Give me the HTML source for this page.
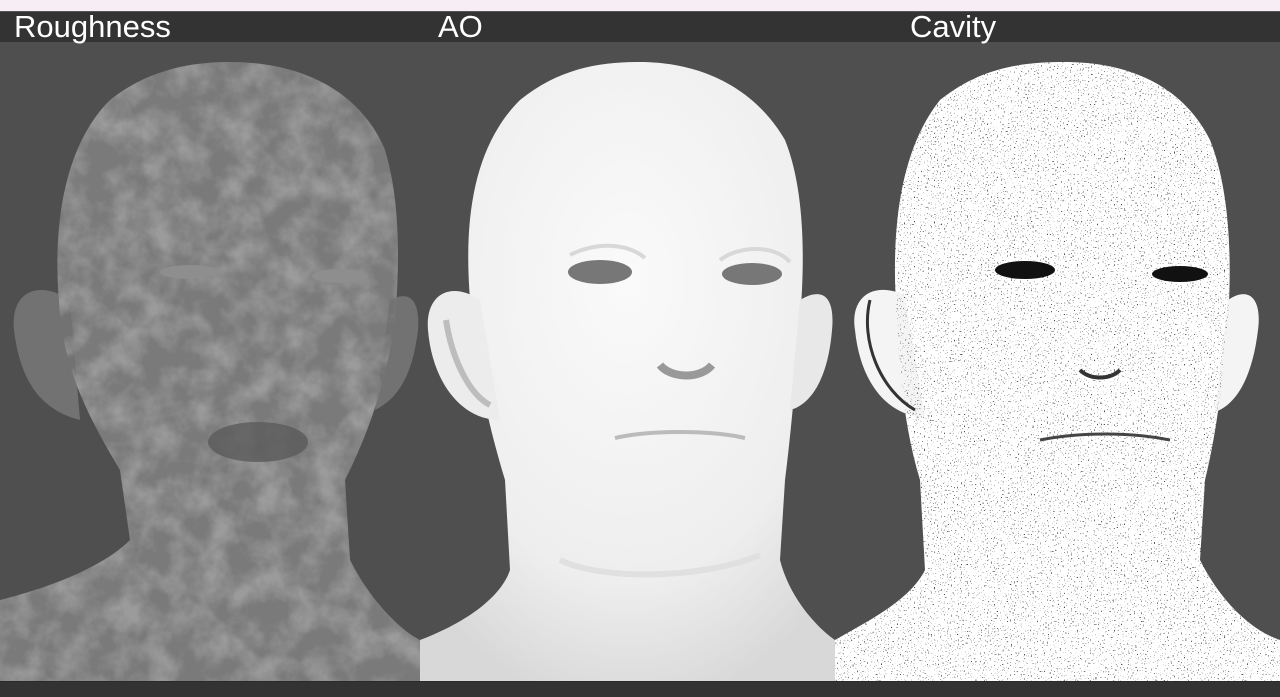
<!DOCTYPE html>
<html><head><meta charset="utf-8"><style>
html,body{margin:0;padding:0;width:1280px;height:696px;overflow:hidden;background:#4f4f4f;font-family:"Liberation Sans",sans-serif}
.top{position:absolute;left:0;top:0;width:1280px;height:11px;background:#f7eef5}
.bar{position:absolute;left:0;top:11px;width:1280px;height:30px;background:#333;border-top:1px solid #555}
.bar span{position:absolute;top:-3px;color:#fff;font-size:31px;font-family:"Liberation Sans",sans-serif}
.bot{position:absolute;left:0;top:681px;width:1280px;height:15px;background:#333;border-top:1px solid #2a2a2a}
svg{position:absolute;left:0;top:41px}
</style></head><body>
<div class="top"></div>
<div class="bar"><span style="left:14px">Roughness</span><span style="left:438px">AO</span><span style="left:910px">Cavity</span></div>
<svg width="1280" height="640" viewBox="0 41 1280 640">
<defs>
<filter id="mott" x="0" y="0" width="1" height="1"><feTurbulence type="fractalNoise" baseFrequency="0.035" numOctaves="4" seed="3"/><feColorMatrix type="matrix" values="0 0 0 0 0.33  0 0 0 0 0.33  0 0 0 0 0.33  0 0 0 2.2 -0.75"/><feComposite in2="SourceGraphic" operator="in"/></filter>
<filter id="spk" x="0" y="0" width="1" height="1"><feTurbulence type="fractalNoise" baseFrequency="0.7" numOctaves="1" seed="5"/><feColorMatrix type="matrix" values="0 0 0 0 0  0 0 0 0 0  0 0 0 0 0  0 0 0 -18 6.2"/><feComposite in2="SourceGraphic" operator="in"/></filter>
<radialGradient id="ao" cx="0.5" cy="0.35" r="0.7"><stop offset="0" stop-color="#fafafa"/><stop offset="0.7" stop-color="#eeeeee"/><stop offset="1" stop-color="#d8d8d8"/></radialGradient>
</defs>
<!-- Roughness -->
<g>
<path d="M0 600 C40 590 100 570 130 540 L120 470 C90 420 70 380 62 330 C50 240 60 150 110 100 C150 68 195 62 230 62 C300 62 360 90 385 150 C400 200 400 260 395 320 C385 390 365 440 345 480 L350 560 C370 600 400 630 420 640 L420 681 L0 681 Z" fill="#7a7a7a"/>
<path d="M70 300 C40 280 10 290 14 330 C20 380 40 410 80 420 Z" fill="#727272"/>
<path d="M390 300 C410 290 420 300 418 330 C412 380 395 400 375 410 Z" fill="#727272"/>
<path d="M0 600 C40 590 100 570 130 540 L120 470 C90 420 70 380 62 330 C50 240 60 150 110 100 C150 68 195 62 230 62 C300 62 360 90 385 150 C400 200 400 260 395 320 C385 390 365 440 345 480 L350 560 C370 600 400 630 420 640 L420 681 L0 681 Z" fill="#000" filter="url(#mott)"/>
<ellipse cx="190" cy="272" rx="30" ry="7" fill="#8e8e8e"/><ellipse cx="340" cy="276" rx="28" ry="7" fill="#8e8e8e"/>
<ellipse cx="258" cy="442" rx="50" ry="20" fill="#5a5a5a" opacity="0.8"/>
</g>
<!-- AO -->
<g>
<path d="M420 640 C460 625 500 600 510 570 L505 480 C490 430 478 380 472 320 C462 230 470 150 520 100 C560 68 600 62 640 62 C690 62 750 80 785 140 C805 190 805 260 800 320 C795 390 790 440 785 480 L780 560 C790 600 820 630 835 640 L835 681 L420 681 Z" fill="url(#ao)"/>
<path d="M480 300 C450 280 425 295 428 330 C432 380 460 420 500 420 Z" fill="#ececec"/>
<path d="M800 300 C825 285 835 300 832 330 C828 380 810 405 790 410 Z" fill="#e8e8e8"/>
<path d="M446 320 C452 360 470 395 490 405" stroke="#bdbdbd" stroke-width="6" fill="none"/>
<ellipse cx="600" cy="272" rx="32" ry="12" fill="#777"/><ellipse cx="752" cy="274" rx="30" ry="11" fill="#777"/>
<path d="M570 255 C600 240 630 245 645 258" stroke="#d8d8d8" stroke-width="4" fill="none"/>
<path d="M720 260 C740 245 775 245 790 262" stroke="#d8d8d8" stroke-width="4" fill="none"/>
<path d="M660 365 C670 378 700 380 712 365" stroke="#999" stroke-width="8" fill="none"/>
<path d="M615 438 C650 430 710 430 745 438" stroke="#bbb" stroke-width="4" fill="none"/>
<path d="M560 560 C600 580 700 580 760 555" stroke="#e0e0e0" stroke-width="6" fill="none"/>
</g>
<!-- Cavity -->
<g>
<path d="M835 640 C870 620 910 600 925 570 L920 480 C905 430 900 380 897 320 C890 230 900 150 940 100 C980 68 1020 62 1065 62 C1120 62 1180 80 1210 140 C1230 190 1232 260 1228 320 C1222 390 1215 440 1205 480 L1200 560 C1220 600 1250 630 1280 640 L1280 681 L835 681 Z" fill="#fff"/>
<path d="M905 295 C870 280 850 300 855 330 C860 380 885 415 925 418 Z" fill="#f4f4f4"/>
<path d="M1228 300 C1250 285 1262 300 1258 330 C1252 380 1235 405 1215 412 Z" fill="#f4f4f4"/>
<path d="M835 640 C870 620 910 600 925 570 L920 480 C905 430 900 380 897 320 C890 230 900 150 940 100 C980 68 1020 62 1065 62 C1120 62 1180 80 1210 140 C1230 190 1232 260 1228 320 C1222 390 1215 440 1205 480 L1200 560 C1220 600 1250 630 1280 640 L1280 681 L835 681 Z" fill="#000" filter="url(#spk)" opacity="0.7"/>
<ellipse cx="1025" cy="270" rx="30" ry="9" fill="#111"/><ellipse cx="1180" cy="274" rx="28" ry="8" fill="#111"/>
<path d="M870 300 C860 340 880 390 915 410" stroke="#333" stroke-width="3" fill="none"/>
<path d="M1080 370 C1090 380 1110 380 1120 370" stroke="#333" stroke-width="4" fill="none"/>
<path d="M1040 440 C1080 432 1130 432 1170 440" stroke="#444" stroke-width="3" fill="none"/>
</g>
</svg>
<div class="bot"></div>
</body></html>
